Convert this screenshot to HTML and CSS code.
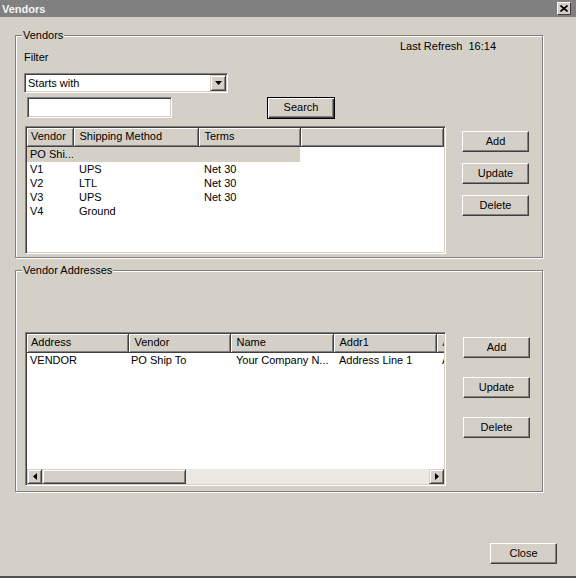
FILE: index.html
```html
<!DOCTYPE html>
<html lang="en">
<head>
  <meta charset="UTF-8" />
  <title>Vendors</title>
  <link rel="stylesheet" href="styles.css">
</head>
<body>
  <div class="window">
    <div class="titlebar">
      <span class="title">Vendors</span>
      <span class="close-box">
        <svg width="8" height="7" viewBox="0 0 8 7"><path d="M0.5 0.5 L7.5 6.5 M7.5 0.5 L0.5 6.5" stroke="#000" stroke-width="1.6" fill="none"/></svg>
      </span>
    </div>

    <div class="client">
      <div class="group group-vendors">
        <div class="group-title">Vendors</div>
        <div class="refresh">Last Refresh&nbsp; 16:14</div>
        <div class="filter-label">Filter</div>
        <div class="combo">
          <span class="combo-text">Starts with</span>
          <span class="combo-btn">
            <svg width="7" height="4" viewBox="0 0 7 4"><path d="M0 0 H7 L3.5 4 Z" fill="#000"/></svg>
          </span>
        </div>
        <div class="search-row">
          <div class="textbox"></div>
          <button class="btn btn-default btn-search">Search</button>
        </div>
        <div class="list-row">
          <div class="grid grid-vendors">
            <table>
              <colgroup><col style="width:46px"><col style="width:125px"><col style="width:102px"><col></colgroup>
              <thead>
                <tr><th class="first">Vendor</th><th>Shipping Method</th><th>Terms</th><th></th></tr>
              </thead>
              <tbody>
                <tr class="selected"><td class="first">PO Shi...</td><td></td><td></td><td class="blank"></td></tr>
                <tr><td class="first">V1</td><td>UPS</td><td>Net 30</td><td></td></tr>
                <tr><td class="first">V2</td><td>LTL</td><td>Net 30</td><td></td></tr>
                <tr><td class="first">V3</td><td>UPS</td><td>Net 30</td><td></td></tr>
                <tr><td class="first">V4</td><td>Ground</td><td></td><td></td></tr>
              </tbody>
            </table>
          </div>
          <div class="side-buttons side-vendors">
            <button class="btn">Add</button>
            <button class="btn">Update</button>
            <button class="btn">Delete</button>
          </div>
        </div>
      </div>

      <div class="group group-addresses">
        <div class="group-title">Vendor Addresses</div>
        <div class="list-row addr-row">
          <div class="grid grid-addresses">
            <div class="grid-clip">
              <table class="wide">
                <colgroup><col style="width:101px"><col style="width:102px"><col style="width:103px"><col style="width:103px"><col style="width:100px"></colgroup>
                <thead>
                  <tr><th class="first">Address</th><th>Vendor</th><th>Name</th><th>Addr1</th><th>Addr2</th></tr>
                </thead>
                <tbody>
                  <tr><td class="first">VENDOR</td><td class="tight">PO Ship To</td><td>Your Company N...</td><td>Address Line 1</td><td>Address Line 2</td></tr>
                </tbody>
              </table>
            </div>
            <div class="hscroll">
              <span class="sb-btn">
                <svg width="4" height="7" viewBox="0 0 4 7"><path d="M4 0 V7 L0 3.5 Z" fill="#000"/></svg>
              </span>
              <span class="sb-thumb"></span>
              <span class="sb-track"></span>
              <span class="sb-btn">
                <svg width="4" height="7" viewBox="0 0 4 7"><path d="M0 0 V7 L4 3.5 Z" fill="#000"/></svg>
              </span>
            </div>
          </div>
          <div class="side-buttons side-addresses">
            <button class="btn">Add</button>
            <button class="btn">Update</button>
            <button class="btn">Delete</button>
          </div>
        </div>
      </div>

      <button class="btn btn-close">Close</button>
    </div>
  </div>
</body>
</html>
```

FILE: styles.css
```css
* {
  box-sizing: border-box;
}
body {
  margin: 0;
  font: 11px "Liberation Sans", Arial, sans-serif;
  color: #000;
  background: #d4d0c8;
}
.window {
  width: 576px;
  height: 578px;
  background: #d4d0c8;
  border-bottom: 2px solid #505050;
}
.titlebar {
  height: 17px;
  background: #808080;
  display: flex;
  align-items: center;
  justify-content: space-between;
  padding: 0 5px 0 2px;
}
.title {
  color: #f4f4f4;
  font-weight: bold;
  font-size: 11px;
}
.close-box {
  width: 14px;
  height: 13px;
  background: #d4d0c8;
  border: 1px solid;
  border-color: #fff #404040 #404040 #fff;
  display: flex;
  align-items: center;
  justify-content: center;
}
.client {
  padding-left: 15px;
}

/* group boxes */
.group {
  width: 528px;
  border: 1px solid #808080;
  box-shadow: 1px 1px 0 #fff, inset 1px 1px 0 #fff;
}
.group-vendors {
  margin-top: 18px;
  height: 223px;
}
.group-addresses {
  margin-top: 12px;
  height: 222px;
}
.group-title {
  width: fit-content;
  margin: -7px 0 0 6px;
  padding: 0 1px;
  background: #d4d0c8;
  line-height: 13px;
}
.refresh {
  margin-top: -2px;
  padding-left: 384px;
  line-height: 13px;
}
.filter-label {
  margin-top: -2px;
  padding-left: 8px;
  line-height: 13px;
}

/* inputs */
.combo {
  margin: 9px 0 0 8px;
  width: 204px;
  height: 20px;
  display: flex;
  align-items: center;
  background: #fff;
  border: 1px solid;
  border-color: #808080 #fff #fff #808080;
  padding: 1px;
  box-shadow: inset 1px 1px 0 #404040, inset -1px -1px 0 #d4d0c8;
}
.combo-text {
  flex: 1;
  padding-left: 2px;
}
.combo-btn {
  width: 16px;
  height: 16px;
  display: flex;
  align-items: center;
  justify-content: center;
  background: #d4d0c8;
  border: 1px solid;
  border-color: #d4d0c8 #404040 #404040 #d4d0c8;
  box-shadow: inset 1px 1px 0 #fff, inset -1px -1px 0 #808080;
}
.search-row {
  margin-top: 4px;
  display: flex;
  align-items: flex-start;
}
.textbox {
  margin-left: 11px;
  width: 145px;
  height: 21px;
  background: #fff;
  border: 1px solid;
  border-color: #808080 #fff #fff #808080;
  box-shadow: inset 1px 1px 0 #404040, inset -1px -1px 0 #d4d0c8;
}

/* buttons */
.btn {
  display: block;
  width: 67px;
  height: 21px;
  padding: 0 0 2px;
  font: inherit;
  color: #000;
  background: #d4d0c8;
  border: 1px solid;
  border-color: #fff #404040 #404040 #fff;
  box-shadow: inset -1px -1px 0 #808080;
}
.btn-default {
  border-color: #000;
  box-shadow: inset 1px 1px 0 #fff, inset -1px -1px 0 #404040, inset -2px -2px 0 #808080;
}
.btn-search {
  margin-left: 95px;
  width: 68px;
  height: 22px;
}
.btn-close {
  margin: 51px 0 0 475px;
  height: 21px;
}

/* lists */
.list-row {
  display: flex;
  align-items: flex-start;
}
.group-vendors .list-row {
  margin-top: 7px;
}
.addr-row {
  margin-top: 55px;
}
.grid {
  margin-left: 9px;
  width: 421px;
  background: #fff;
  border: 1px solid;
  border-color: #808080 #fff #fff #808080;
  padding: 1px;
  box-shadow: inset 1px 1px 0 #404040, inset -1px -1px 0 #d4d0c8;
  overflow: hidden;
}
.grid-vendors {
  height: 128px;
}
.grid-addresses {
  height: 154px;
  display: flex;
  flex-direction: column;
}
.grid-clip {
  flex: 1;
  overflow: hidden;
}
table {
  border-collapse: collapse;
  table-layout: fixed;
  width: 417px;
}
table.wide {
  width: 509px;
}
th {
  height: 18px;
  padding: 0 0 2px 6px;
  font-weight: normal;
  text-align: left;
  background: #d4d0c8;
  border-right: 1px solid #404040;
  border-bottom: 1px solid #404040;
  box-shadow: inset 1px 1px 0 #fff, inset -1px -1px 0 #808080;
  white-space: nowrap;
  overflow: hidden;
}
th.first {
  padding-left: 4px;
}
td {
  height: 14px;
  line-height: 14px;
  padding: 0 0 0 6px;
  white-space: nowrap;
  overflow: hidden;
}
td.first {
  padding-left: 3px;
}
td.tight {
  padding-left: 3px;
}
tbody tr:first-child td {
  height: 15px;
  padding-bottom: 1px;
}
.grid-addresses tbody tr:first-child td {
  padding-bottom: 2px;
}
tr.selected td {
  background: #d4d0c8;
}
tr.selected td.blank {
  background: #fff;
}
.side-buttons {
  display: flex;
  flex-direction: column;
  padding-top: 5px;
}
.side-vendors {
  margin-left: 16px;
  gap: 11px;
}
.side-addresses {
  margin-left: 17px;
  gap: 19px;
}

/* horizontal scrollbar */
.hscroll {
  height: 15px;
  display: flex;
  background: #ebe9e3;
}
.sb-btn {
  width: 15px;
  height: 15px;
  display: flex;
  align-items: center;
  justify-content: center;
  background: #d4d0c8;
  border: 1px solid;
  border-color: #d4d0c8 #404040 #404040 #d4d0c8;
  box-shadow: inset 1px 1px 0 #fff, inset -1px -1px 0 #808080;
}
.sb-thumb {
  width: 144px;
  background: #d4d0c8;
  border: 1px solid;
  border-color: #d4d0c8 #404040 #404040 #d4d0c8;
  box-shadow: inset 1px 1px 0 #fff, inset -1px -1px 0 #808080;
}
.sb-track {
  flex: 1;
}
```
